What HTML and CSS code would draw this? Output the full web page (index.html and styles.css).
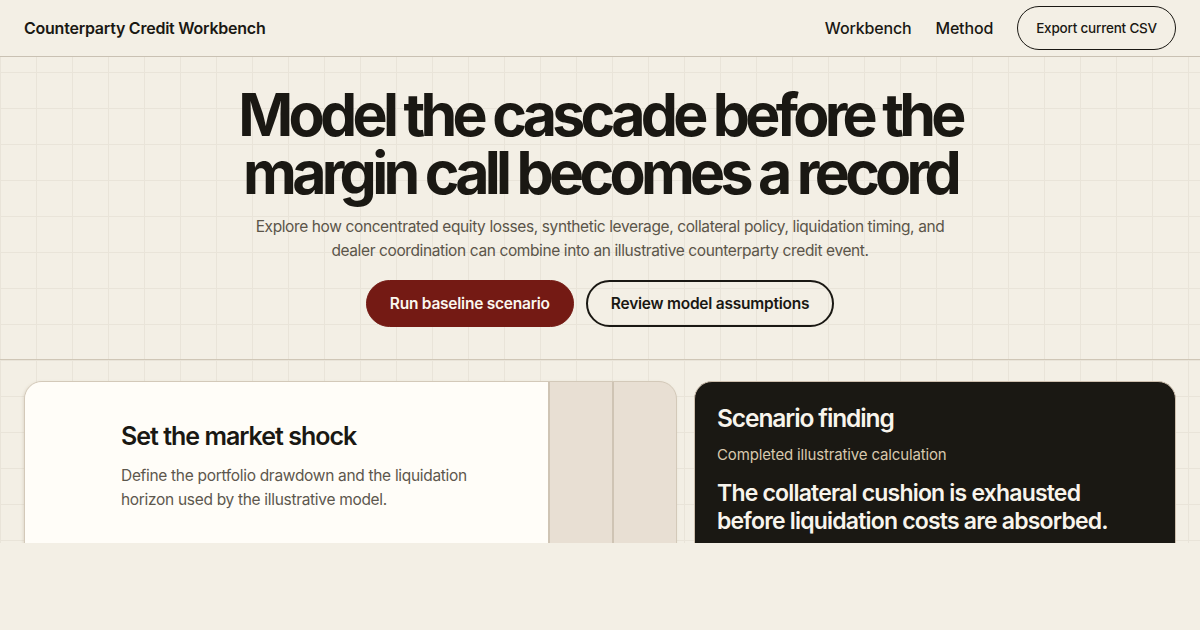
FILE: index.html
```html
<!DOCTYPE html>
<html lang="en">
<head>
<meta charset="utf-8">
<title>Counterparty Credit Workbench</title>
<link rel="stylesheet" href="styles.css">
</head>
<body>
<div class="stage">
  <header class="topbar">
    <div class="brand">Counterparty Credit Workbench</div>
    <nav class="nav">
      <a class="nav-link" href="#workbench">Workbench</a>
      <a class="nav-link" href="#method">Method</a>
      <button class="btn-export" type="button">Export current CSV</button>
    </nav>
  </header>

  <section class="hero">
    <h1 class="hero-title">Model the cascade before the<br>margin call becomes a record</h1>
    <p class="hero-sub">Explore how concentrated equity losses, synthetic leverage, collateral policy, liquidation timing, and dealer coordination can combine into an illustrative counterparty credit event.</p>
    <div class="hero-actions">
      <button class="btn btn-primary" type="button">Run baseline scenario</button>
      <button class="btn btn-outline" type="button">Review model assumptions</button>
    </div>
  </section>

  <main class="workbench" id="workbench">
    <div class="step-card">
      <div class="step-panel">
        <h2 class="step-title">Set the market shock</h2>
        <p class="step-desc">Define the portfolio drawdown and the liquidation horizon used by the illustrative model.</p>
      </div>
      <div class="step-peek"></div>
      <div class="step-peek"></div>
    </div>
    <aside class="finding-card">
      <h2 class="finding-title">Scenario finding</h2>
      <p class="finding-status">Completed illustrative calculation</p>
      <p class="finding-text">The collateral cushion is exhausted before liquidation costs are absorbed.</p>
    </aside>
  </main>
</div>
</body>
</html>
```

FILE: styles.css
```css
* { box-sizing: border-box; }

html, body {
  margin: 0;
  padding: 0;
  background: #f3efe5;
  color: #1a1813;
  font-family: Inter, "Liberation Sans", sans-serif;
}

.stage {
  height: 543px;
  overflow: hidden;
  background-color: #f3efe5;
  background-image:
    linear-gradient(to bottom, #e9e4d9 1px, transparent 1px),
    linear-gradient(to right, #e9e4d9 1px, transparent 1px);
  background-size: 36px 36px;
}

/* Header */
.topbar {
  height: 57px;
  display: flex;
  align-items: center;
  justify-content: space-between;
  padding: 0 24px;
  background: #f3efe5;
  border-bottom: 1px solid #c9c1b3;
}

.brand {
  font-size: 16px;
  font-weight: 600;
  letter-spacing: -0.015em;
}

.nav {
  display: flex;
  align-items: center;
  gap: 24px;
}

.nav-link {
  color: #1a1813;
  text-decoration: none;
  font-size: 16px;
  font-weight: 500;
  letter-spacing: -0.01em;
}

.btn-export {
  font-family: inherit;
  height: 44px;
  padding: 0 18px;
  border: 1.5px solid #1a1813;
  border-radius: 22px;
  background: transparent;
  color: #1a1813;
  font-size: 13.5px;
  font-weight: 500;
  letter-spacing: -0.015em;
}

/* Hero */
.hero {
  display: flex;
  flex-direction: column;
  align-items: center;
  text-align: center;
  padding: 29px 24px 32px;
  border-bottom: 1px solid #cfc6b6;
}

.hero-title {
  margin: 0;
  font-size: 59px;
  line-height: 58px;
  font-weight: 700;
  letter-spacing: -0.08em;
}

.hero-sub {
  margin: 13px 0 0;
  max-width: 700px;
  font-size: 15.5px;
  line-height: 24px;
  letter-spacing: -0.025em;
  color: #5b5549;
}

.hero-actions {
  margin-top: 17px;
  display: flex;
  gap: 12px;
}

.btn {
  font-family: inherit;
  height: 47px;
  padding: 0 23px;
  border-radius: 24px;
  font-size: 15.5px;
  font-weight: 600;
  letter-spacing: -0.015em;
}

.btn-primary {
  background: #741a14;
  color: #fbf6ee;
  border: 1.5px solid #741a14;
}

.btn-outline {
  background: transparent;
  color: #1a1813;
  border: 2px solid #1a1813;
}

/* Workbench */
.workbench {
  display: grid;
  grid-template-columns: 1.355fr 1fr;
  gap: 17px;
  padding: 21px 24px 0;
}

.step-card {
  display: flex;
  height: 240px;
  border: 1px solid #d3c9b9;
  border-radius: 18px;
  overflow: hidden;
  background: #e8dfd3;
  box-shadow: -1px 1px 3px rgba(120, 100, 70, 0.15);
}

.step-panel {
  flex: 1;
  background: #fffdf8;
  padding: 38px 40px 0 96px;
}

.step-title {
  margin: 0;
  font-size: 25px;
  line-height: 32px;
  font-weight: 600;
  letter-spacing: -0.04em;
}

.step-desc {
  margin: 12px 0 0;
  font-size: 15.5px;
  line-height: 24px;
  letter-spacing: -0.02em;
  color: #5d574d;
}

.step-peek {
  width: 64px;
  border-left: 2px solid #cfc4b4;
}

.finding-card {
  height: 240px;
  border: 1px solid #cdbfae;
  border-radius: 18px;
  background: #1a1813;
  color: #f8f4ec;
  padding: 20px 22px 0;
}

.finding-title {
  margin: 0;
  font-size: 24.5px;
  line-height: 32px;
  font-weight: 600;
  letter-spacing: -0.045em;
}

.finding-status {
  margin: 10px 0 0;
  font-size: 15px;
  line-height: 22px;
  letter-spacing: -0.01em;
  color: #d8c8ad;
}

.finding-text {
  margin: 13px 0 0;
  max-width: 410px;
  font-size: 23px;
  line-height: 28px;
  font-weight: 600;
  letter-spacing: -0.035em;
}
```
